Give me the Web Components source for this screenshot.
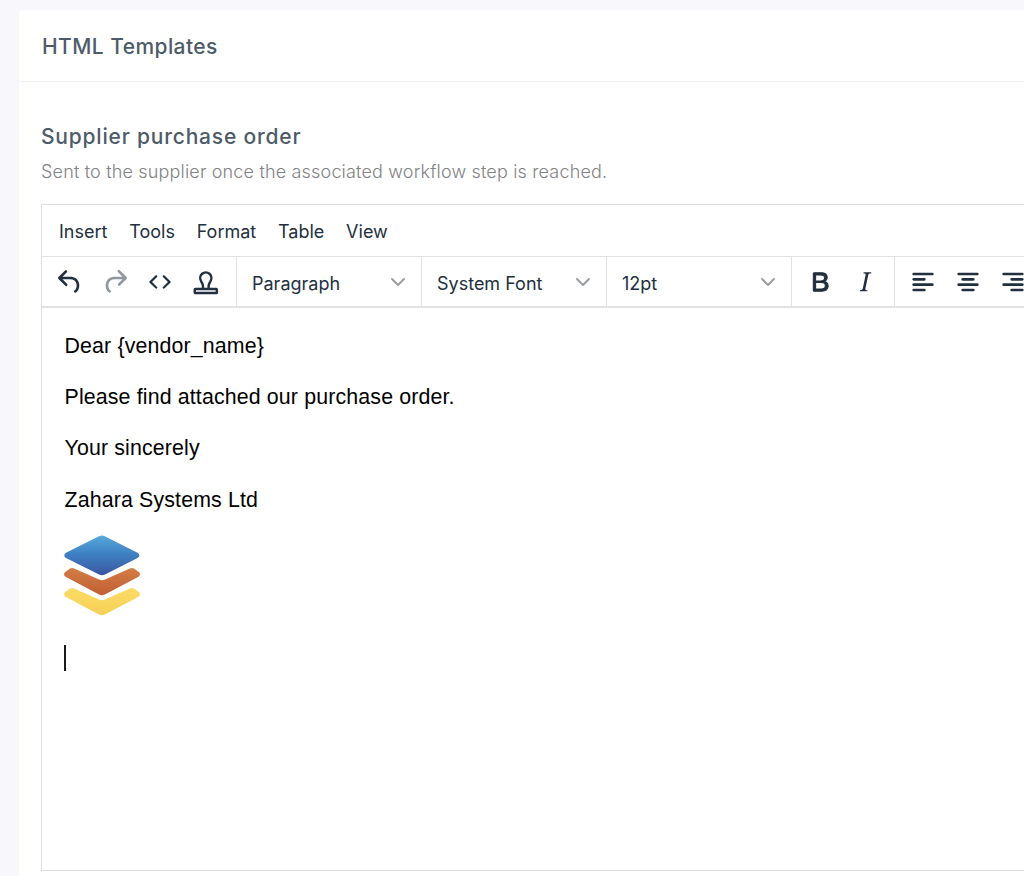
<!DOCTYPE html>
<html lang="en">
<head>
<meta charset="utf-8">
<title>HTML Templates</title>
<style>
  html, body { margin: 0; height: 876px; overflow: hidden; background: #f8f8fc; }
  body { padding: 10px 0 0 19px; box-sizing: border-box; }
</style>
</head>
<body>
<template-card heading="HTML Templates">
  <template-section heading="Supplier purchase order" hint="Sent to the supplier once the associated workflow step is reached.">
    <rich-editor>
      <p>Dear {vendor_name}</p>
      <p>Please find attached our purchase order.</p>
      <p>Your sincerely</p>
      <p>Zahara Systems Ltd</p>
    </rich-editor>
  </template-section>
</template-card>

<script>
// icon paths, 24 grid
const ICONS = {
  undo: 'M6.4 8H12c3.7 0 6.2 2 6.8 5.1.6 2.7-.4 5.6-2.3 6.8a1 1 0 0 1-1-1.8c1.1-.6 1.8-2.7 1.4-4.6-.5-2.1-2.1-3.5-4.9-3.5H6.4l3.3 3.3a1 1 0 1 1-1.4 1.4l-5-5a1 1 0 0 1 0-1.4l5-5a1 1 0 0 1 1.4 1.4L6.4 8z',
  redo: 'M17.6 10H12c-2.8 0-4.4 1.4-4.9 3.5-.4 2 .3 4 1.4 4.6a1 1 0 1 1-1 1.8c-1.9-1.2-2.9-4.1-2.3-6.8C5.8 10 8.3 8 12 8h5.6l-3.3-3.3a1 1 0 1 1 1.4-1.4l5 5a1 1 0 0 1 0 1.4l-5 5a1 1 0 0 1-1.4-1.4l3.3-3.3z',
  code: 'M9.8 15.7c.3.3.3.8 0 1-.3.4-.9.4-1.2 0l-4.4-4.1a.8.8 0 0 1 0-1.2l4.4-4.2c.3-.3.9-.3 1.2 0 .3.3.3.8 0 1.1L6 12l3.8 3.7zm4.4 0c-.3.3-.3.8 0 1 .3.4.9.4 1.2 0l4.4-4.1c.3-.3.3-.9 0-1.2l-4.4-4.2c-.3-.3-.9-.3-1.2 0a.8.8 0 0 0 0 1.1L18 12l-3.8 3.7z',
  bold: 'M7.8 19c-.3 0-.5 0-.6-.2l-.2-.5V5.7c0-.2 0-.4.2-.5l.6-.2h5c1.5 0 2.7.3 3.5 1 .7.6 1.1 1.4 1.1 2.5a3 3 0 0 1-.6 1.9c-.4.6-1 1-1.6 1.2.9.1 1.6.5 2.1 1.1.5.6.8 1.4.8 2.3 0 1.2-.4 2.2-1.2 2.9-.8.7-2 1-3.6 1H7.8zm.9-7.7h3.7c1 0 1.8-.2 2.3-.6.5-.4.7-1 .7-1.7 0-.7-.2-1.3-.7-1.6-.5-.4-1.3-.6-2.3-.6H8.7v4.5zm0 6h4.2c1 0 1.8-.2 2.3-.6.5-.5.8-1.1.8-1.9 0-.8-.3-1.4-.8-1.9-.5-.4-1.3-.6-2.3-.6H8.7v5z',
  italic: 'M16.7 4.7l-.1.9h-.3c-.6 0-1 0-1.4.3-.3.3-.4.6-.5 1.1l-2.1 9.8v.6c0 .5.4.8 1.4.8h.2l-.2.8H8l.2-.8h.2c1.1 0 1.8-.5 2-1.5l2-9.8.1-.5c0-.6-.4-.8-1.4-.8h-.3l.2-.9h5.8z',
  left: 'M5 5h14a1 1 0 0 1 0 2H5a1 1 0 1 1 0-2zm0 4h8a1 1 0 0 1 0 2H5a1 1 0 1 1 0-2zm0 8h8a1 1 0 0 1 0 2H5a1 1 0 0 1 0-2zm0-4h14a1 1 0 0 1 0 2H5a1 1 0 0 1 0-2z',
  center: 'M5 5h14a1 1 0 0 1 0 2H5a1 1 0 1 1 0-2zm3 4h8a1 1 0 0 1 0 2H8a1 1 0 1 1 0-2zm0 8h8a1 1 0 0 1 0 2H8a1 1 0 0 1 0-2zm-3-4h14a1 1 0 0 1 0 2H5a1 1 0 0 1 0-2z',
  right: 'M5 5h14a1 1 0 0 1 0 2H5a1 1 0 1 1 0-2zm6 4h8a1 1 0 0 1 0 2h-8a1 1 0 0 1 0-2zm0 8h8a1 1 0 0 1 0 2h-8a1 1 0 0 1 0-2zm-6-4h14a1 1 0 0 1 0 2H5a1 1 0 0 1 0-2z'
};
// stamp is drawn as an outline, the others are filled
const STAMP = `<g fill="none" stroke="#222f3e" stroke-width="1.8" stroke-linejoin="round" transform="translate(.6 0)">
  <path d="M9.9 16.9V15c0-1.4-.9-2.4-1.500-3.800a4.200 4.200 0 1 1 7.200 0c-.6 1.400-1.500 2.400-1.500 3.800v1.900"/>
  <rect x="3.700" y="17.300" width="16.600" height="3" rx=".5"/></g>`;

class TemplateCard extends HTMLElement {
  connectedCallback() {
    this.attachShadow({ mode: 'open' }).innerHTML = `
      <style>
        :host { display: block; width: 1120px; height: 900px; background: #fff; border-radius: 4px 0 0 0; box-shadow: 0 0 1px #eeeef4; }
        header { height: 72px; box-sizing: border-box; padding: 1px 23px 0; display: flex; align-items: center;
          border-bottom: 1px solid #f3f3f6;
          font: 500 21px/1 Inter, sans-serif; letter-spacing: .43px; color: #4d5b69; }
        main { padding: 42px 23px 0 22px; }
      </style>
      <header></header>
      <main><slot></slot></main>`;
    this.shadowRoot.querySelector('header').textContent = this.getAttribute('heading');
  }
}

class TemplateSection extends HTMLElement {
  connectedCallback() {
    this.attachShadow({ mode: 'open' }).innerHTML = `
      <style>
        :host { display: block; }
        h3 { margin: 0; font: 500 21px/26px Inter, sans-serif; letter-spacing: .8px; color: #4d5b69; }
        p { margin: 10px 0 20px; font: 300 18px/24px Inter, sans-serif; letter-spacing: .17px; color: #808285; }
      </style>
      <h3></h3><p></p><slot></slot>`;
    this.shadowRoot.querySelector('h3').textContent = this.getAttribute('heading');
    this.shadowRoot.querySelector('p').textContent = this.getAttribute('hint');
  }
}

class TbButton extends HTMLElement {
  connectedCallback() {
    const name = this.getAttribute('icon');
    const off = this.hasAttribute('disabled');
    const art = name === 'stamp' ? STAMP : `<path fill-rule="evenodd" d="${ICONS[name]}"${name === 'bold' ? ' stroke="#222f3e" stroke-width=".8"' : ''}/>`;
    this.attachShadow({ mode: 'open' }).innerHTML = `
      <style>
        :host { display: flex; width: 45px; height: 45px; align-items: center; justify-content: center; flex: none; }
        svg { width: 32px; height: 32px; fill: ${off ? '#222f3e80' : '#222f3e'}; }
      </style>
      <svg viewBox="0 0 24 24">${art}</svg>`;
  }
}

class TbSelect extends HTMLElement {
  connectedCallback() {
    this.attachShadow({ mode: 'open' }).innerHTML = `
      <style>
        :host { display: flex; align-items: center; justify-content: space-between; flex: none; width: 185px;
          box-sizing: border-box; padding: 0 15px; border-left: 1px solid #e2e2e2;
          font: 400 18px/1 Inter, sans-serif; color: #222f3e; }
        span { position: relative; top: 2px; }
        svg { width: 16px; height: 16px; fill: none; stroke: #9a9da2; stroke-width: 2; stroke-linecap: round; stroke-linejoin: round; }
      </style>
      <span><slot></slot></span>
      <svg viewBox="0 0 16 16"><path d="M2 5l6 6 6-6"/></svg>`;
  }
}

class TbGroup extends HTMLElement {
  connectedCallback() {
    this.attachShadow({ mode: 'open' }).innerHTML = `
      <style>
        :host { display: flex; align-items: center; flex: none; box-sizing: border-box; padding-left: 5px; border-left: 1px solid #e2e2e2; }
        :host([first]) { border-left: 0; padding-left: 5.500px; }
      </style>
      <slot></slot>`;
  }
}

class EditorMenubar extends HTMLElement {
  connectedCallback() {
    this.attachShadow({ mode: 'open' }).innerHTML = `
      <style>
        :host { display: flex; height: 52px; box-sizing: border-box; align-items: center; gap: 21.800px; padding: 3px 0 0 17px;
          border-bottom: 1px solid #e2e2e2; font: 400 18px/1 Inter, sans-serif; color: #222f3e; }
      </style>
      <span>Insert</span><span>Tools</span><span>Format</span><span>Table</span><span>View</span>`;
  }
}

class StackLogo extends HTMLElement {
  connectedCallback() {
    this.attachShadow({ mode: 'open' }).innerHTML = `
      <style>
        :host { display: block; width: 76px; height: 81px; margin: -1px 0 0 -1px; }
        svg { display: block; }
      </style>
      <svg width="76" height="81" viewBox="0 0 76 81">
        <defs>
          <linearGradient id="b" x1="0" y1="0" x2="0" y2="1"><stop offset="0" stop-color="#55a9dc"/><stop offset=".45" stop-color="#3f82c4"/><stop offset="1" stop-color="#3a55a0"/></linearGradient>
          <linearGradient id="o" x1="0" y1="0" x2="0" y2="1"><stop offset="0" stop-color="#d27d46"/><stop offset="1" stop-color="#c25f33"/></linearGradient>
          <linearGradient id="y" x1="0" y1="0" x2="0" y2="1"><stop offset="0" stop-color="#fbdc66"/><stop offset="1" stop-color="#f6cf57"/></linearGradient>
        </defs>
        <path fill="url(#b)" d="M35 1.2c2-1.1 3.800-1.100 5.800 0L73 17.500c2.900 1.500 2.900 4.300 0 5.800L41 39.500c-2 1-3.900 1-5.900 0L2.500 23.300c-2.900-1.500-2.900-4.300 0-5.800z"/>
        <path fill="url(#o)" d="M2 36.500c-2.600 1.400-2.600 4.200 0 5.600L35 59.400c2 1 3.900 1 5.900 0L74 42.100c2.600-1.400 2.600-4.200 0-5.600l-4-3c-1.400-.8-2.800-.8-4.200 0L41 44.500c-2 1-3.900 1-5.900 0L10.200 33.500c-1.400-.8-2.800-.8-4.200 0z"/>
        <path fill="url(#y)" d="M2 56.500c-2.600 1.400-2.600 4.200 0 5.600L35 79.400c2 1 3.900 1 5.900 0L74 62.100c2.600-1.400 2.600-4.200 0-5.600l-4-3c-1.400-.8-2.800-.8-4.200 0L41 64.500c-2 1-3.900 1-5.900 0L10.200 53.500c-1.400-.8-2.800-.8-4.200 0z"/>
      </svg>`;
  }
}

class RichEditor extends HTMLElement {
  connectedCallback() {
    this.attachShadow({ mode: 'open' }).innerHTML = `
      <style>
        :host { display: block; width: 1060px; height: 667px; box-sizing: border-box; border: 1px solid #dedede; border-right: 0; background: #fff; }
        .toolbar { display: flex; height: 51px; box-sizing: border-box; border-bottom: 2px solid #e2e2e2; }
        .body { padding: 23px 23px 0 22.500px; font: 400 21.330px/30px "Liberation Sans", Arial, sans-serif; letter-spacing: .15px; color: #000; }
        ::slotted(p) { margin: 0 0 21.200px; }
        .caret { width: 2px; height: 26px; background: #1a1a1a; margin: 29px 0 0 -0.500px; }
      </style>
      <editor-menubar></editor-menubar>
      <div class="toolbar">
        <tb-group first style="width:194px">
          <tb-button icon="undo"></tb-button>
          <tb-button icon="redo" disabled></tb-button>
          <tb-button icon="code"></tb-button>
          <tb-button icon="stamp"></tb-button>
        </tb-group>
        <tb-select>Paragraph</tb-select>
        <tb-select>System Font</tb-select>
        <tb-select>12pt</tb-select>
        <tb-group style="width:103px">
          <tb-button icon="bold"></tb-button>
          <tb-button icon="italic"></tb-button>
        </tb-group>
        <tb-group style="width:200px">
          <tb-button icon="left"></tb-button>
          <tb-button icon="center"></tb-button>
          <tb-button icon="right"></tb-button>
        </tb-group>
      </div>
      <div class="body">
        <slot></slot>
        <stack-logo></stack-logo>
        <div class="caret"></div>
      </div>`;
  }
}

customElements.define('tb-button', TbButton);
customElements.define('tb-select', TbSelect);
customElements.define('tb-group', TbGroup);
customElements.define('editor-menubar', EditorMenubar);
customElements.define('stack-logo', StackLogo);
customElements.define('rich-editor', RichEditor);
customElements.define('template-section', TemplateSection);
customElements.define('template-card', TemplateCard);
</script>
</body>
</html>
